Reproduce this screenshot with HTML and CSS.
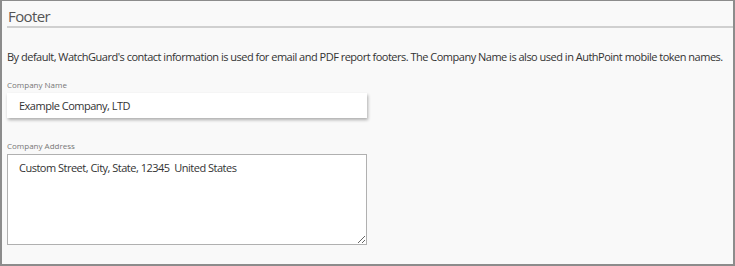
FILE: index.html
```html
<!DOCTYPE html>
<html lang="en">

<head>
    <meta charset="UTF-8">
    <title>Footer Settings</title>
    <link rel="stylesheet" href="styles.css">
</head>

<body>

    <div class="panel">
        <h2 class="section-title">Footer</h2>

        <p class="intro">By default, WatchGuard's contact information is used for email and PDF report footers. The Company Name is also used in AuthPoint mobile token names.</p>

        <!-- Company name field -->
        <div class="field">
            <label for="companyName">Company Name</label>
            <input type="text" id="companyName" class="name-input" value="Example Company, LTD">
        </div>

        <!-- Company address field -->
        <div class="field">
            <label for="companyAddress">Company Address</label>
            <textarea id="companyAddress" class="address-input">Custom Street, City, State, 12345  United States</textarea>
        </div>
    </div>

</body>

</html>
```

FILE: styles.css
```css
/* General Reset */
* {
    margin: 0;
    padding: 0;
    box-sizing: border-box;
}

body {
    font-family: "Open Sans", Arial, sans-serif;
    background-color: #f9f9f9;
    color: #333;
}

/* Outer frame */
.panel {
    height: 266px;
    border: 2px solid #8c8c8c;
    border-top-width: 1px;
    padding: 5px 0 0 5px;
}

.section-title {
    font-size: 15px;
    font-weight: normal;
    letter-spacing: -0.6px;
    color: #555;
    line-height: 20px;
    padding-left: 1px;
    border-bottom: 2px solid #d0d0d0;
}

.intro {
    font-size: 11px;
    letter-spacing: -0.5px;
    line-height: 16px;
    margin-top: 21px;
    color: #333;
}

/* Form fields */
.field {
    margin-top: 14px;
    width: 360px;
}

.field + .field {
    margin-top: 22px;
}

.field label {
    display: block;
    font-size: 8px;
    color: #777;
    line-height: 12px;
    margin-bottom: 2px;
}

.name-input {
    display: block;
    width: 100%;
    height: 25px;
    border: none;
    background-color: white;
    box-shadow: 1px 2px 3px rgba(0, 0, 0, 0.3);
    font-family: "Open Sans", Arial, sans-serif;
    font-size: 11px;
    letter-spacing: -0.5px;
    color: #333;
    padding: 0 12px;
    outline: none;
}

.address-input {
    display: block;
    width: 100%;
    height: 91px;
    border: 1px solid #b0b0b0;
    background-color: white;
    font-family: "Open Sans", Arial, sans-serif;
    font-size: 11px;
    letter-spacing: -0.5px;
    color: #333;
    padding: 5px 11px;
    resize: both;
    outline: none;
}
```
